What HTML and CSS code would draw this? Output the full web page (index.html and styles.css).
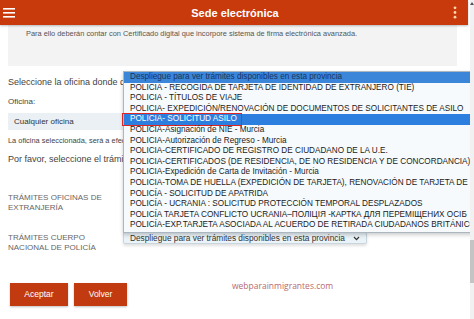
FILE: index.html
```html
<!doctype html>
<html>

	<head>
		<meta charset="utf-8">
		<title>Sede electrónica</title>
		<link rel="stylesheet" href="styles.css">
	</head>

	<body>
		<div class="page">
			<!-- cabecera -->
			<div class="topbar">
				<svg class="burger" width="12" height="10" viewBox="0 0 12 10">
					<rect x="0" y="0" width="12" height="1.6" fill="#fff" />
					<rect x="0" y="4" width="12" height="1.6" fill="#fff" />
					<rect x="0" y="8" width="12" height="1.6" fill="#fff" />
				</svg>
				<span class="title">Sede electrónica</span>
				<svg class="kebab" width="4" height="13" viewBox="0 0 4 13">
					<circle cx="2" cy="1.8" r="1.4" fill="#f7d6a8" />
					<circle cx="2" cy="6.5" r="1.4" fill="#f7d6a8" />
					<circle cx="2" cy="11.2" r="1.4" fill="#f7d6a8" />
				</svg>
			</div>

			<div class="notice">
				Para ello deberán contar con Certificado digital que incorpore sistema de firma electrónica avanzada.
			</div>

			<!-- formulario -->
			<div class="form">
				<p class="lead">Seleccione la oficina donde desea realizar el trámite</p>
				<p class="small-label">Oficina:</p>
				<div class="office">Cualquier oficina</div>
				<p class="hint">La oficina seleccionada, será a efectos de la cita previa</p>
				<p class="lead">Por favor, seleccione el trámite que desea realizar</p>

				<div class="field first">
					<div class="field-label">TRÁMITES OFICINAS DE<br>EXTRANJERÍA</div>
				</div>
				<div class="field">
					<div class="field-label">TRÁMITES CUERPO<br>NACIONAL DE POLICÍA</div>
					<div class="select">
						<span>Despliegue para ver trámites disponibles en esta provincia</span>
						<svg width="7" height="5" viewBox="0 0 7 5"><path d="M1 1 L3.5 3.6 L6 1" stroke="#333" stroke-width="1.2" fill="none" /></svg>
					</div>
				</div>

				<div class="buttons">
					<span class="btn">Aceptar</span>
					<span class="btn">Volver</span>
				</div>
			</div>

			<!-- desplegable abierto -->
			<ul class="options">
				<li class="hover">Despliegue para ver trámites disponibles en esta provincia</li>
				<li>POLICIA - RECOGIDA DE TARJETA DE IDENTIDAD DE EXTRANJERO (TIE)</li>
				<li>POLICIA - TÍTULOS DE VIAJE</li>
				<li>POLICIA- EXPEDICIÓN/RENOVACIÓN DE DOCUMENTOS DE SOLICITANTES DE ASILO</li>
				<li class="picked">POLICIA- SOLICITUD ASILO<span class="mark"></span></li>
				<li>POLICIA-Asignación de NIE - Murcia</li>
				<li>POLICIA-Autorización de Regreso - Murcia</li>
				<li>POLICIA-CERTIFICADO DE REGISTRO DE CIUDADANO DE LA U.E.</li>
				<li>POLICIA-CERTIFICADOS (DE RESIDENCIA, DE NO RESIDENCIA Y DE CONCORDANCIA)</li>
				<li>POLICIA-Expedición de Carta de Invitación - Murcia</li>
				<li>POLICIA-TOMA DE HUELLA (EXPEDICIÓN DE TARJETA), RENOVACIÓN DE TARJETA DE LARGA DURACIÓN</li>
				<li>POLICÍA - SOLICITUD DE APATRIDA</li>
				<li>POLICÍA - UCRANIA : SOLICITUD PROTECCIÓN TEMPORAL DESPLAZADOS</li>
				<li>POLICÍA TARJETA CONFLICTO UCRANIA–ПОЛІЦІЯ -КАРТКА ДЛЯ ПЕРЕМІЩЕНИХ ОСІБ</li>
				<li>POLICÍA-EXP.TARJETA ASOCIADA AL ACUERDO DE RETIRADA CIUDADANOS BRITÁNICOS</li>
			</ul>

			<span class="watermark">webparainmigrantes.com</span>
		</div>

		<div class="scroll">
			<span class="arrow"></span>
			<span class="thumb"></span>
		</div>
	</body>

</html>
```

FILE: styles.css
```css
			html,
			body {
				margin: 0;
				height: 100%;
				overflow: hidden;
			}

			body {
				display: flex;
				font-family: "Liberation Sans", Arial, sans-serif;
				color: #444;
				background: #fff;
			}

			.page {
				width: 470px;
				position: relative;
				overflow: hidden;
			}

			.scroll {
				width: 4px;
				background: #f1f1f1;
				display: flex;
				flex-direction: column;
			}

			.scroll .arrow {
				display: block;
				width: 0;
				height: 0;
				margin-top: 2px;
				border-left: 2px solid transparent;
				border-right: 2px solid transparent;
				border-bottom: 3px solid #555;
			}

			.scroll .thumb {
				display: block;
				height: 43px;
				margin-top: 235px;
				background: #c4c4c4;
			}

			.topbar {
				height: 25px;
				margin-right: 2px;
				background: #c83a0c;
				display: flex;
				align-items: center;
				padding: 0 11px 0 3px;
				box-shadow: 0 1px 2px rgba(0, 0, 0, 0.25);
				position: relative;
				z-index: 2;
			}

			.topbar .title {
				flex: 1;
				text-align: center;
				color: #fff;
				font-weight: bold;
				font-size: 11px;
				margin-left: 2px;
			}

			.notice {
				background: #f3f3f3;
				margin: -1px 13px 0 8px;
				height: 42px;
				box-sizing: border-box;
				padding: 5px 18px;
				font-size: 7.4px;
				color: #555;
			}

			.form {
				padding: 10px 0 0 8px;
			}

			.form p {
				margin: 0;
			}

			.lead {
				font-size: 9px;
				line-height: 12px;
			}

			.small-label {
				font-size: 8px;
				line-height: 11px;
				margin-top: 8px !important;
			}

			.office {
				margin-top: 6px;
				height: 17px;
				width: 200px;
				background: #ebf0f4;
				font-size: 8px;
				line-height: 17px;
				padding-left: 6px;
				color: #333;
			}

			.hint {
				font-size: 7.4px;
				line-height: 10px;
				margin-top: 6px !important;
				margin-bottom: 7px !important;
			}

			.field {
				display: flex;
				align-items: flex-start;
			}

			.field.first {
				margin-top: 27px;
				margin-bottom: 19px;
			}

			.field-label {
				width: 115px;
				font-size: 8px;
				line-height: 10px;
				color: #666;
				margin-top: 1px;
			}

			.select {
				width: 244px;
				height: 12px;
				box-sizing: border-box;
				background: #eaf3f8;
				border: 1px solid #c9d6de;
				border-radius: 2px;
				box-shadow: 0 2px 3px rgba(0, 0, 0, 0.12);
				display: flex;
				align-items: center;
				justify-content: space-between;
				padding: 0 6px;
				font-size: 8.3px;
				color: #333;
			}

			.buttons {
				display: flex;
				gap: 6px;
				margin-top: 30px;
				margin-left: 2px;
			}

			.btn {
				background: #c23b10;
				color: #fff;
				font-size: 8.5px;
				height: 23px;
				line-height: 23px;
				text-align: center;
				box-shadow: 0 1px 2px rgba(0, 0, 0, 0.25);
			}

			.btn:first-child {
				width: 58px;
			}

			.btn:last-child {
				width: 53px;
			}

			/* lista abierta del select */
			.options {
				position: absolute;
				left: 123px;
				top: 71px;
				width: 420px;
				margin: 0;
				padding: 0 0 1px 0;
				list-style: none;
				background: #f6fafc;
				border: 1px solid #aab7c0;
				box-shadow: 0 2px 4px rgba(0, 0, 0, 0.2);
				font-size: 8.2px;
				color: #1b1b1b;
			}

			.options li {
				height: 10.6px;
				line-height: 10.6px;
				padding-left: 6px;
				white-space: nowrap;
				position: relative;
			}

			.options li.hover {
				background: #3b86d8;
				color: #173463;
			}

			.options li.picked {
				background: #2d7fdf;
				color: #fff;
			}

			.options .mark {
				position: absolute;
				left: -2px;
				top: -1.5px;
				width: 120px;
				height: 13px;
				box-sizing: border-box;
				border: 1.6px solid #dc2626;
			}

			.watermark {
				position: absolute;
				left: 232px;
				top: 280px;
				font-family: "Open Sans", sans-serif;
				font-size: 8.5px;
				color: #b86a70;
			}
```
